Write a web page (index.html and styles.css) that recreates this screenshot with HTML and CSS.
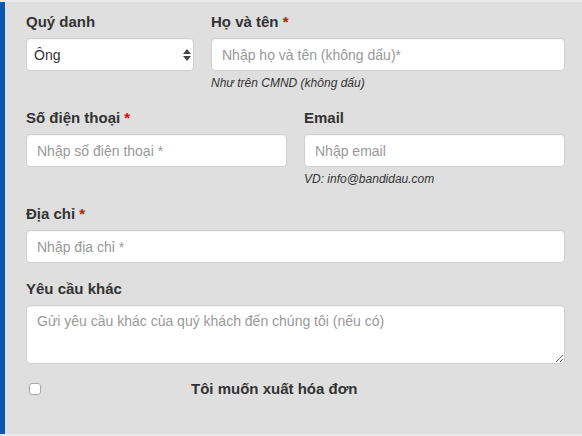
FILE: index.html
```html
<!DOCTYPE html>
<html lang="vi">
<head>
  <meta charset="UTF-8" />
  <title>Thông tin khách hàng</title>
  <link rel="stylesheet" href="styles.css">
</head>
<body>
  <div class="panel">
    <div class="row row-title">
      <div class="group">
        <label for="title">Quý danh</label>
        <div class="select-wrap">
          <select id="title">
            <option>Ông</option>
            <option>Bà</option>
          </select>
          <svg class="select-arrows" width="8" height="12" viewBox="0 0 8 12">
            <path d="M4 0 L8 5 L0 5 Z" fill="#444" />
            <path d="M0 7 L8 7 L4 12 Z" fill="#444" />
          </svg>
        </div>
      </div>
      <div class="group">
        <label for="fullname">Họ và tên <span class="req">*</span></label>
        <input type="text" id="fullname" placeholder="Nhập họ và tên (không dấu)*" />
        <p class="help">Như trên CMND (không dấu)</p>
      </div>
    </div>

    <div class="row row-half">
      <div class="group">
        <label for="phone">Số điện thoại <span class="req">*</span></label>
        <input type="text" id="phone" placeholder="Nhập số điện thoại *" />
      </div>
      <div class="group">
        <label for="email">Email</label>
        <input type="text" id="email" placeholder="Nhập email" />
        <p class="help">VD: info@bandidau.com</p>
      </div>
    </div>

    <div class="group">
      <label for="address">Địa chỉ <span class="req">*</span></label>
      <input type="text" id="address" placeholder="Nhập địa chỉ *" />
    </div>

    <div class="group">
      <label for="note">Yêu cầu khác</label>
      <textarea id="note" placeholder="Gửi yêu cầu khác của quý khách đến chúng tôi (nếu có)"></textarea>
    </div>

    <div class="invoice">
      <input type="checkbox" id="invoice" />
      <label for="invoice">Tôi muốn xuất hóa đơn</label>
    </div>
  </div>
</body>
</html>
```

FILE: styles.css
```css
html, body {
  margin: 0;
  height: 100%;
}
body {
  background: #e9e9e9;
  font-family: "Liberation Sans", Arial, sans-serif;
  color: #333;
  padding-top: 2px;
  box-sizing: border-box;
}
.panel {
  height: 432px;
  background: #dfdfdf;
  border-left: 5px solid #0b55b3;
  padding: 10px 17px 0 21px;
  box-sizing: border-box;
}
.row {
  display: grid;
  column-gap: 17px;
}
.row-title {
  grid-template-columns: 168px 1fr;
}
.row-half {
  grid-template-columns: 1fr 1fr;
}
.group {
  margin-bottom: 16px;
}
.group label {
  display: block;
  font-weight: bold;
  font-size: 15px;
  line-height: 20px;
  margin-bottom: 6px;
}
.req {
  color: #e00;
}
input[type="text"], select, textarea {
  display: block;
  width: 100%;
  height: 33px;
  padding: 0 10px;
  font-family: inherit;
  font-size: 14px;
  color: #333;
  background: #fff;
  border: 1px solid #cfcfcf;
  border-radius: 4px;
  box-shadow: inset 0 1px 1px rgba(0, 0, 0, 0.05);
  box-sizing: border-box;
  outline: none;
}
::placeholder {
  color: #999;
}
select {
  appearance: none;
  -webkit-appearance: none;
  padding-left: 7px;
}
.select-wrap {
  position: relative;
}
.select-arrows {
  position: absolute;
  right: 3px;
  top: 11px;
}
textarea {
  height: 59px;
  padding: 7px 10px;
  resize: vertical;
}
.help {
  margin: 4px 0 0;
  font-size: 12px;
  line-height: 17px;
  font-style: italic;
}
.invoice {
  display: flex;
  align-items: center;
  margin-top: 1px;
}
.invoice input {
  appearance: none;
  -webkit-appearance: none;
  width: 12px;
  height: 12px;
  margin: 0 0 0 3px;
  background: #fff;
  border: 1px solid #a9a9a9;
  border-radius: 3px;
}
.invoice label {
  font-weight: bold;
  font-size: 15px;
  margin-left: 150px;
}
```
